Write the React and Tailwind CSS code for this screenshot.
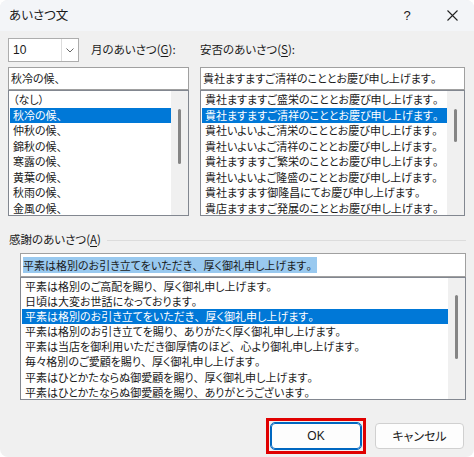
import React from "react"

const font = "font-['Yu_Gothic_UI','Noto_Sans_CJK_JP',sans-serif] [font-feature-settings:'palt']"

const monthItems = ["（なし）", "秋冷の候、", "仲秋の候、", "錦秋の候、", "寒露の候、", "黄葉の候、", "秋雨の候、", "金風の候、"]

const safetyItems = [
  "貴社ますますご盛栄のこととお慶び申し上げます。",
  "貴社ますますご清祥のこととお慶び申し上げます。",
  "貴社いよいよご清栄のこととお慶び申し上げます。",
  "貴社いよいよご清祥のこととお慶び申し上げます。",
  "貴社ますますご繁栄のこととお慶び申し上げます。",
  "貴社いよいよご隆盛のこととお慶び申し上げます。",
  "貴社ますます御隆昌にてお慶び申し上げます。",
  "貴店ますますご発展のこととお慶び申し上げます。",
]

const thanksItems = [
  "平素は格別のご高配を賜り、厚く御礼申し上げます。",
  "日頃は大変お世話になっております。",
  "平素は格別のお引き立てをいただき、厚く御礼申し上げます。",
  "平素は格別のお引き立てを賜り、ありがたく厚く御礼申し上げます。",
  "平素は当店を御利用いただき御厚情のほど、心より御礼申し上げます。",
  "毎々格別のご愛顧を賜り、厚く御礼申し上げます。",
  "平素はひとかたならぬ御愛顧を賜り、厚く御礼申し上げます。",
  "平素はひとかたならぬ御愛顧を賜り、ありがとうございます。",
]

// keep 、 and 。 full width while kana stay proportional
const Jp = ({ text }) =>
  text.split(/([、。])/).map((part, i) =>
    part === "、" || part === "。" ? (
      <span key={i} className="[font-feature-settings:normal]">
        {part}
      </span>
    ) : (
      part
    )
  )

// list box with a thin win11 style scrollbar
const ListBox = ({ items, selected, height, rowH, thumbTop, thumbHeight }) => (
  <div className={`flex border border-[#828790] bg-white ${height}`}>
    <div className="flex-1 flex flex-col pt-[1px] pl-[1px] overflow-hidden">
      {items.map((item, i) => (
        <div
          key={i}
          className={`shrink-0 pl-[3px] whitespace-nowrap ${rowH} ${
            i === selected ? "bg-[#0078d7] text-white" : "text-[#1a1a1a]"
          }`}
        >
          <Jp text={item} />
        </div>
      ))}
    </div>
    <div className="w-[17px] bg-[#f0f0f0] flex justify-center">
      <div className={`w-[3px] rounded-full bg-[#858585] ${thumbTop} ${thumbHeight}`} />
    </div>
  </div>
)

const TextField = ({ children, className = "" }) => (
  <div className={`h-[23px] border border-[#a0a0a0] bg-white flex items-center px-[2px] whitespace-nowrap ${className}`}>
    {children}
  </div>
)

const Mnemonic = ({ label, k }) => (
  <span>
    {label}(<span className="underline underline-offset-2">{k}</span>)
  </span>
)

export default function App() {
  return (
    <div className="w-[474px] h-[457px] bg-white">
      <div className={`w-[474px] h-[457px] rounded-[8px] overflow-hidden bg-[#f0f0f0] text-[11px] text-[#1a1a1a] ${font}`}>
        {/* Title bar */}
        <div className="h-[31px] bg-[#f3f5f8] flex items-center pl-[9px]">
          <span className="flex-1 text-[12.5px]">あいさつ文</span>
          <span className="w-[46px] text-center text-[13px] font-['Liberation_Sans',sans-serif]">?</span>
          <div className="w-[44px] flex justify-center">
            <svg width="11" height="11" viewBox="0 0 11 11" fill="none" stroke="#222" strokeWidth="1.1">
              <path d="M0.5 0.5 L10.5 10.5 M10.5 0.5 L0.5 10.5" />
            </svg>
          </div>
        </div>

        {/* Top lists */}
        <div className="grid grid-cols-[181px_265px] gap-x-[11px] px-[8px] pt-[7px] text-[11.5px]">
          <div className="flex items-center h-[24px]">
            <div className="w-[71px] h-[24px] border border-[#adadad] bg-white flex items-center">
              <span className="flex-1 pl-[4px] font-['Liberation_Sans',sans-serif] text-[12px]">10</span>
              <div className="w-[17px] h-full border-l border-[#dcdcdc] flex items-center justify-center">
                <svg width="8" height="5" viewBox="0 0 8 5" fill="none" stroke="#666" strokeWidth="1">
                  <path d="M0.5 0.5 L4 4 L7.5 0.5" />
                </svg>
              </div>
            </div>
            <span className="ml-[12px]">
              <Mnemonic label="月のあいさつ" k="G" />:
            </span>
          </div>
          <div className="flex items-center h-[24px]">
            <span>
              <Mnemonic label="安否のあいさつ" k="S" />:
            </span>
          </div>

          <div className="mt-[5px] flex flex-col text-[11px]">
            <TextField>
              <Jp text="秋冷の候、" />
            </TextField>
            <ListBox items={monthItems} selected={1} height="h-[126px]" rowH="h-[15.5px] leading-[15.5px]" thumbTop="mt-[18px]" thumbHeight="h-[55px]" />
          </div>
          <div className="mt-[5px] flex flex-col text-[11px]">
            <TextField>
              <Jp text="貴社ますますご清祥のこととお慶び申し上げます。" />
            </TextField>
            <ListBox items={safetyItems} selected={1} height="h-[126px]" rowH="h-[15.5px] leading-[15.5px]" thumbTop="mt-[18px]" thumbHeight="h-[33px]" />
          </div>
        </div>

        {/* Thanks group */}
        <div className="px-[8px] mt-[16px]">
          <div className="flex items-center h-[16px] text-[11.5px]">
            <span className="pl-[1px]">
              <Mnemonic label="感謝のあいさつ" k="A" />
            </span>
            <div className="flex-1 ml-[6px] h-px bg-[#dcdcdc]" />
          </div>
          <div className="pl-[12px] pt-[5px] flex flex-col">
            <TextField className="h-[24px]">
              <span className="bg-[#99c9ef]">
                <Jp text="平素は格別のお引き立てをいただき、厚く御礼申し上げます。" />
              </span>
            </TextField>
            <ListBox items={thanksItems} selected={2} height="h-[123px]" rowH="h-[15.1px] leading-[15.1px]" thumbTop="mt-[17px]" thumbHeight="h-[64px]" />
          </div>
        </div>

        {/* Buttons */}
        <div className="flex justify-end items-center px-[10px] mt-[18px] gap-[9px]">
          <div className="border-[3px] border-[#e00000] p-[2px]">
            <button className="w-[90px] h-[26px] rounded-[4px] border border-[#0067c0] bg-[#fdfdfd] outline outline-1 outline-[#0067c0] text-[12px] font-['Liberation_Sans',sans-serif]">
              OK
            </button>
          </div>
          <button className="w-[89px] h-[26px] rounded-[4px] border border-[#d0d0d0] bg-[#fdfdfd] text-[12px]">
            キャンセル
          </button>
        </div>
      </div>
    </div>
  )
}
